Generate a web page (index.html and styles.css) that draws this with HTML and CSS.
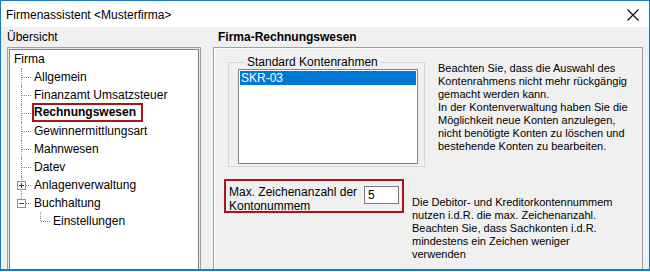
FILE: index.html
```html
<!DOCTYPE html>
<html lang="de">
<head>
<meta charset="utf-8">
<title>Firmenassistent</title>
<link rel="stylesheet" href="styles.css">
</head>
<body>
<div class="window">
  <div class="titlebar">
    <span class="title">Firmenassistent &lt;Musterfirma&gt;</span>
    <svg class="close" width="12" height="12" viewBox="0 0 12 12"><path d="M0.5 0.5 L11.5 11.5 M11.5 0.5 L0.5 11.5" stroke="#000" stroke-width="1.1" fill="none"/></svg>
  </div>
  <div class="content">
    <div class="headers">
      <div class="h-left">Übersicht</div>
      <div class="h-right">Firma-Rechnungswesen</div>
    </div>
    <div class="panels">
      <div class="tree-outer">
        <ul class="tree">
          <li class="root">Firma</li>
          <li class="child">Allgemein</li>
          <li class="child">Finanzamt Umsatzsteuer</li>
          <li class="child"><span class="sel">Rechnungswesen</span></li>
          <li class="child">Gewinnermittlungsart</li>
          <li class="child">Mahnwesen</li>
          <li class="child">Datev</li>
          <li class="child">
            <svg class="exp" width="9" height="9" viewBox="0 0 9 9"><rect x="0.5" y="0.5" width="8" height="8" fill="#fff" stroke="#919191"/><path d="M2 4.5 H7 M4.5 2 V7" stroke="#1e3a6e"/></svg>
            Anlagenverwaltung</li>
          <li class="child last">
            <svg class="exp" width="9" height="9" viewBox="0 0 9 9"><rect x="0.5" y="0.5" width="8" height="8" fill="#fff" stroke="#919191"/><path d="M2 4.5 H7" stroke="#1e3a6e"/></svg>
            Buchhaltung</li>
          <li class="grandchild">Einstellungen</li>
        </ul>
      </div>
      <div class="form-panel">
        <div class="row-top">
          <fieldset class="group">
            <legend>Standard Kontenrahmen</legend>
            <div class="listbox">
              <div class="item selected">SKR-03</div>
            </div>
          </fieldset>
          <p class="note note-top">Beachten Sie, dass die Auswahl des<br>Kontenrahmens nicht mehr rückgängig<br>gemacht werden kann.<br>In der Kontenverwaltung haben Sie die<br>Möglichkeit neue Konten anzulegen,<br>nicht benötigte Konten zu löschen und<br>bestehende Konten zu bearbeiten.</p>
        </div>
        <div class="row-bottom">
          <div class="maxbox">
            <label class="maxlabel" for="maxlen">Max. Zeichenanzahl der<br>Kontonummem</label>
            <input id="maxlen" class="field" type="text" value="5">
          </div>
          <p class="note note-bottom">Die Debitor- und Kreditorkontennummem<br>nutzen i.d.R. die max. Zeichenanzahl.<br>Beachten Sie, dass Sachkonten i.d.R.<br>mindestens ein Zeichen weniger<br>verwenden</p>
        </div>
      </div>
    </div>
  </div>
</div>
</body>
</html>
```

FILE: styles.css
```css
* { box-sizing: border-box; }
html, body {
  margin: 0;
  padding: 0;
  background: #ffffff;
}
body {
  width: 650px;
  height: 272px;
  overflow: hidden;
  font-family: "Liberation Sans", Arial, sans-serif;
  font-size: 12px;
  color: #000;
}
.window {
  width: 650px;
  height: 271px;
  border: 1px solid #1979ca;
  border-bottom-width: 2px;
  display: flex;
  flex-direction: column;
  overflow: hidden;
}
.titlebar {
  height: 26px;
  flex: none;
  background: #fff;
  display: flex;
  align-items: center;
  padding-left: 5px;
  padding-right: 10px;
  justify-content: space-between;
}
.title {
  font-size: 12px;
  padding-top: 1px;
}
.close { display: block; margin-top: 2px; }
.content {
  flex: 1;
  background: #f0f0f0;
  display: flex;
  flex-direction: column;
  min-height: 0;
  overflow: hidden;
}
.headers {
  height: 20px;
  flex: none;
  display: flex;
  align-items: center;
}
.h-left {
  width: 211px;
  padding-left: 6px;
}
.h-right {
  font-weight: bold;
  padding-left: 6px;
}
.panels {
  flex: 1;
  display: flex;
  min-height: 0;
  padding-left: 6px;
}
.tree-outer {
  width: 194px;
  height: 260px;
  border: 1px solid #a0a0a0;
  padding: 1px;
  background: #e9e9e9;
  flex: none;
}
.tree {
  list-style: none;
  margin: 0;
  padding: 0;
  height: 100%;
  background: #fff;
  border: 1px solid #828282;
}
.tree li {
  position: relative;
  height: 18px;
  line-height: 18px;
  white-space: nowrap;
}
.tree .root { padding-left: 4px; }
.tree .child { padding-left: 24px; }
.tree .grandchild { padding-left: 43px; }
.tree .child::before,
.tree .grandchild::before {
  content: "";
  position: absolute;
  left: 11px;
  top: 0;
  bottom: 0;
  border-left: 1px dotted #8c8c8c;
}
.tree .child.last::before { bottom: 9px; }
.tree .grandchild::before { left: 30px; bottom: 9px; }
.tree .child::after,
.tree .grandchild::after {
  content: "";
  position: absolute;
  left: 12px;
  top: 9px;
  width: 9px;
  border-top: 1px dotted #8c8c8c;
}
.tree .grandchild::after { left: 31px; }
.tree .exp {
  position: absolute;
  left: 7px;
  top: 5px;
  z-index: 1;
}
.sel {
  font-weight: bold;
  display: inline-block;
  line-height: 15px;
  padding: 0 5px 0 0;
  outline: 2px solid #a8161c;
  outline-offset: 0;
  vertical-align: 1px;
}
.form-panel {
  margin-left: 12px;
  width: 430px;
  height: 260px;
  flex: none;
  border: 1px solid #a0a0a0;
  box-shadow: inset 1px 1px 0 #fff;
  padding: 7px 0 0 1px;
}
.row-top {
  display: flex;
  align-items: flex-start;
}
.group {
  margin: 0 0 0 13px;
  width: 196px;
  height: 112px;
  border: 1px solid #d6d6d6;
  padding: 0 6px 3px 9px;
}
.group legend {
  padding: 0 2px;
  margin-left: 7px;
  line-height: 14px;
  font-size: 12px;
}
.listbox {
  width: 180px;
  height: 95px;
  background: #fff;
  border: 1px solid #828282;
  padding: 1px 1px 0 1px;
}
.item {
  height: 14px;
  line-height: 14px;
  padding-left: 1px;
}
.item.selected {
  background: #0078d7;
  color: #fff;
}
.note {
  margin: 0;
  font-size: 11px;
  line-height: 13px;
  white-space: nowrap;
}
.note-top {
  margin-left: 13px;
  margin-top: 7px;
}
.row-bottom {
  display: flex;
  align-items: flex-start;
  margin-top: 12px;
}
.maxbox {
  margin-left: 9px;
  width: 180px;
  height: 34px;
  border: 2px solid #a8161c;
  display: flex;
  align-items: flex-start;
  padding: 4px 0 0 3px;
}
.maxlabel {
  width: 135px;
  line-height: 14px;
  font-size: 12px;
}
.field {
  width: 35px;
  height: 18px;
  margin: 1px 0 0 0;
  border: 1px solid #7a7a7a;
  background: #fff;
  font-family: "Liberation Sans", Arial, sans-serif;
  font-size: 12px;
  padding: 0 0 0 3px;
  color: #000;
}
.note-bottom {
  margin-left: 8px;
  margin-top: 17px;
}
```
